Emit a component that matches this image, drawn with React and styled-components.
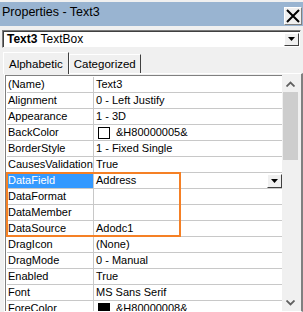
import React from 'react';
import styled, { createGlobalStyle } from 'styled-components';

const GlobalStyle = createGlobalStyle`
	html, body {
		margin: 0;
		padding: 0;
		background: #f0f0f0;
	}
	body {
		font-family: "Liberation Sans", Arial, sans-serif;
		font-size: 11px;
		color: #000;
	}
`;

const rows = [
	{ name: '(Name)', value: 'Text3' },
	{ name: 'Alignment', value: '0 - Left Justify' },
	{ name: 'Appearance', value: '1 - 3D' },
	{ name: 'BackColor', value: '&H80000005&', swatch: '#ffffff' },
	{ name: 'BorderStyle', value: '1 - Fixed Single' },
	{ name: 'CausesValidation', value: 'True' },
	{ name: 'DataField', value: 'Address', selected: true },
	{ name: 'DataFormat', value: '' },
	{ name: 'DataMember', value: '' },
	{ name: 'DataSource', value: 'Adodc1' },
	{ name: 'DragIcon', value: '(None)' },
	{ name: 'DragMode', value: '0 - Manual' },
	{ name: 'Enabled', value: 'True' },
	{ name: 'Font', value: 'MS Sans Serif' },
	{ name: 'ForeColor', value: '&H80000008&', swatch: '#000000' },
];

const DropArrow = () => (
	<svg width="7" height="4" viewBox="0 0 7 4">
		<path d="M0 0h7L3.5 4z" fill="#000" />
	</svg>
);

const App = () => {
	return (
		<>
			<GlobalStyle />
			<Window>
				<TitleBar>
					<Title>Properties - Text3</Title>
					<CloseButton>
						<svg width="14" height="14" viewBox="0 0 14 14">
							<path d="M1 1L13 13M13 1L1 13" stroke="#000" strokeWidth="2" />
						</svg>
					</CloseButton>
				</TitleBar>
				<Combo>
					<ComboText>
						<b>Text3</b> TextBox
					</ComboText>
					<ComboButton>
						<DropArrow />
					</ComboButton>
				</Combo>
				<Tabs>
					<Tab active>Alphabetic</Tab>
					<Tab>Categorized</Tab>
				</Tabs>
				<Panel>
					<Grid>
						{rows.map((r) => (
							<Row key={r.name}>
								<NameCell selected={r.selected}>{r.name}</NameCell>
								<ValueCell>
									{r.swatch && <Swatch color={r.swatch} />}
									<span>{r.value}</span>
									{r.selected && (
										<CellButton>
											<DropArrow />
										</CellButton>
									)}
								</ValueCell>
							</Row>
						))}
						<Highlight />
					</Grid>
					<ScrollBar>
						<ScrollArrow>
							<svg width="9" height="6" viewBox="0 0 9 6">
								<path d="M0.5 5.5L4.5 1.5L8.5 5.5" stroke="#606060" strokeWidth="1.8" fill="none" />
							</svg>
						</ScrollArrow>
						<Thumb />
						<Track />
						<ScrollArrow>
							<svg width="9" height="6" viewBox="0 0 9 6">
								<path d="M0.5 0.5L4.5 4.5L8.5 0.5" stroke="#606060" strokeWidth="1.8" fill="none" />
							</svg>
						</ScrollArrow>
					</ScrollBar>
				</Panel>
			</Window>
		</>
	);
};

export default App;

const Window = styled.div`
	width: 303px;
	height: 312px;
	overflow: hidden;
	display: flex;
	flex-direction: column;
	background: #f0f0f0;
`;

const TitleBar = styled.div`
	height: 24px;
	margin-top: 2px;
	background: #99b4d1;
	display: flex;
	align-items: center;
	justify-content: space-between;
	padding-left: 2px;
	padding-right: 1px;
`;

const Title = styled.div`
	font-size: 12.5px;
	color: #000;
	margin-top: -4px;
`;

const CloseButton = styled.div`
	width: 16px;
	height: 16px;
	margin-top: 4px;
	background: #f0f0f0;
	border: 1px solid #fff;
	border-right-color: #808080;
	border-bottom-color: #808080;
	display: flex;
	align-items: center;
	justify-content: center;
`;

const Combo = styled.div`
	margin: 4px 2px 0 2px;
	height: 14px;
	background: #fff;
	border: 1px solid #7a7a7a;
	border-right-color: #f0f0f0;
	border-bottom-color: #f0f0f0;
	box-shadow: inset 1px 1px 0 #404040;
	display: flex;
	align-items: center;
	justify-content: space-between;
	padding: 1px 1px 1px 4px;
`;

const ComboText = styled.div`
	font-size: 12px;
	line-height: 14px;
`;

const ComboButton = styled.div`
	width: 13px;
	height: 11px;
	background: #f0f0f0;
	border: 1px solid #fff;
	border-right-color: #404040;
	border-bottom-color: #404040;
	display: flex;
	align-items: center;
	justify-content: center;
`;

const Tabs = styled.div`
	display: flex;
	align-items: flex-end;
	height: 23px;
	margin-top: 2px;
	padding-left: 3px;
`;

const Tab = styled.div`
	height: ${(p) => (p.active ? '21px' : '18px')};
	padding: 0 ${(p) => (p.active ? '5px' : '4px')};
	background: #f0f0f0;
	border: 1px solid #fff;
	border-right: 1px solid #404040;
	border-bottom: none;
	display: flex;
	align-items: center;
	font-size: 11.5px;
	position: relative;
	z-index: ${(p) => (p.active ? 1 : 0)};
	margin-bottom: ${(p) => (p.active ? '-1px' : '0')};
`;

const Panel = styled.div`
	flex: 1;
	margin-left: 4px;
	border: 1px solid #fff;
	border-right: 2px solid #808080;
	padding: 1px 2px 0 0;
	display: flex;
	min-height: 0;
`;

const Grid = styled.div`
	flex: 1;
	position: relative;
	border-top: 1px solid #808080;
	border-left: 1px solid #808080;
	padding: 1px 0 0 1px;
	background: #fff;
	overflow: hidden;
`;

const Row = styled.div`
	display: flex;
	height: 16px;
	border-bottom: 1px solid #c8c8c8;
	box-sizing: border-box;
	background: #fff;
`;

const NameCell = styled.div`
	width: 85px;
	flex: none;
	padding-left: 1px;
	line-height: 15px;
	font-size: 11px;
	border-right: 1px solid #c8c8c8;
	background: ${(p) => (p.selected ? '#3399ff' : '#fff')};
	color: ${(p) => (p.selected ? '#fff' : '#000')};
	white-space: nowrap;
	overflow: hidden;
`;

const ValueCell = styled.div`
	flex: 1;
	display: flex;
	align-items: center;
	padding-left: 2px;
	font-size: 11px;
	line-height: 15px;
	white-space: nowrap;
`;

const Swatch = styled.span`
	width: 10px;
	height: 10px;
	border: 1px solid #000;
	background: ${(p) => p.color};
	margin: 0 6px 0 2px;
	flex: none;
`;

const CellButton = styled.div`
	margin-left: auto;
	width: 13px;
	height: 12px;
	background: #f0f0f0;
	border: 1px solid #fff;
	border-right-color: #404040;
	border-bottom-color: #404040;
	display: flex;
	align-items: center;
	justify-content: center;
`;

const Highlight = styled.div`
	position: absolute;
	left: 0px;
	top: 96px;
	width: 171px;
	height: 61px;
	border: 2px solid #f58025;
	pointer-events: none;
`;

const ScrollBar = styled.div`
	width: 17px;
	flex: none;
	background: #f0f0f0;
	display: flex;
	flex-direction: column;
`;

const ScrollArrow = styled.div`
	height: 17px;
	display: flex;
	align-items: center;
	justify-content: center;
	flex: none;
`;

const Thumb = styled.div`
	height: 68px;
	margin: 0 1px;
	background: #cdcdcd;
	flex: none;
`;

const Track = styled.div`
	flex: 1;
`;
